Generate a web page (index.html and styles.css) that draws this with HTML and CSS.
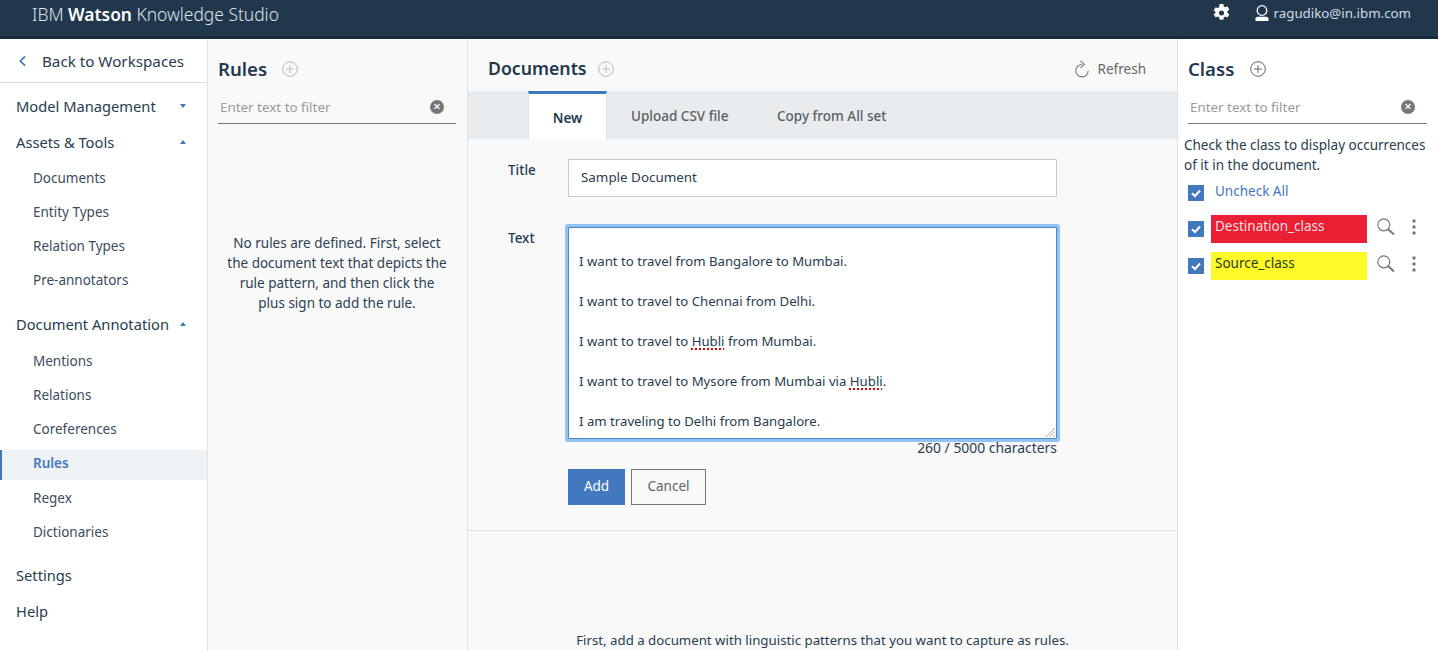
FILE: index.html
```html
<!DOCTYPE html>
<html lang="en">
<head>
<meta charset="utf-8">
<title>IBM Watson Knowledge Studio</title>
<link rel="stylesheet" href="styles.css">
</head>
<body>
<header class="topbar">
  <div class="brand">IBM <b>Watson</b> Knowledge Studio</div>
  <div class="top-right">
    <svg class="gear" viewBox="1.500 0.800 15 16.400" width="17" height="18"><path fill="#fff" fill-rule="evenodd" d="M7.300 0.800h3.400l.4 2.200 1.200.7 2.100-.8 1.700 3-1.700 1.400v1.400l1.700 1.400-1.700 3-2.100-.8-1.200.7-.4 2.200H7.300l-.4-2.200-1.200-.7-2.100.8-1.700-3 1.700-1.400V8.100L1.900 6.700l1.700-3 2.100.8 1.200-.7zM9 6.700a2.300 2.300 0 1 0 0 4.600 2.300 2.300 0 0 0 0-4.600z"/></svg>
    <svg class="user" viewBox="0 0 14 16" width="14" height="16"><circle cx="7" cy="5.500" r="4.800" fill="none" stroke="#fff" stroke-width="1.300"/><path fill="#fff" d="M2 11.800h10l1.500 1.500V16H.5v-2.700z"/></svg>
    <span class="email">ragudiko@in.ibm.com</span>
  </div>
</header>
<div class="main">
  <nav class="sidebar">
    <a class="back"><svg viewBox="0 0 10 14" width="9" height="12"><path d="M8 1.500 2.500 7 8 12.500" fill="none" stroke="#3f78c0" stroke-width="2"/></svg><span>Back to Workspaces</span></a>
    <div class="nav-head nav-first"><span>Model Management</span><i class="caret down"></i></div>
    <div class="nav-head nav-assets"><span>Assets &amp; Tools</span><i class="caret up"></i></div>
    <a class="nav-item">Documents</a>
    <a class="nav-item">Entity Types</a>
    <a class="nav-item">Relation Types</a>
    <a class="nav-item">Pre-annotators</a>
    <div class="nav-head nav-gap"><span>Document Annotation</span><i class="caret up"></i></div>
    <a class="nav-item">Mentions</a>
    <a class="nav-item">Relations</a>
    <a class="nav-item">Coreferences</a>
    <a class="nav-item active">Rules</a>
    <a class="nav-item">Regex</a>
    <a class="nav-item">Dictionaries</a>
    <div class="nav-head nav-gap2">Settings</div>
    <div class="nav-head">Help</div>
  </nav>

  <section class="rules">
    <div class="panel-title"><h2>Rules</h2>
      <svg class="plus faint" viewBox="0 0 16 16" width="16" height="16"><circle cx="8" cy="8" r="7.300"/><path d="M8 4v8M4 8h8"/></svg>
    </div>
    <div class="filter"><span>Enter text to filter</span><i class="clear">×</i></div>
    <p class="empty">No rules are defined. First, select the document text that depicts the rule pattern, and then click the plus sign to add the rule.</p>
  </section>

  <section class="docs">
    <div class="docs-head">
      <h2>Documents</h2>
      <svg class="plus faint" viewBox="0 0 16 16" width="16" height="16"><circle cx="8" cy="8" r="7.300"/><path d="M8 4v8M4 8h8"/></svg>
      <div class="refresh">
        <svg viewBox="0 0 14 18" width="14" height="18"><path d="M7 4.500A6.200 6.200 0 1 0 13.200 10.700" fill="none" stroke="#777" stroke-width="1.100"/><path d="M5.500 0.800 9.300 4.400 5.500 7.800" fill="none" stroke="#777" stroke-width="1.100"/></svg>
        <span>Refresh</span>
      </div>
    </div>
    <div class="tabs">
      <a class="tab current">New</a>
      <a class="tab">Upload CSV file</a>
      <a class="tab">Copy from All set</a>
    </div>
    <form class="doc-form">
      <div class="row">
        <label>Title</label>
        <div class="title-input">Sample Document</div>
      </div>
      <div class="row row-text">
        <label>Text</label>
        <div class="text-col">
          <div class="textarea">
            <p>I want to travel from Bangalore to Mumbai.</p>
            <p>I want to travel to Chennai from Delhi.</p>
            <p>I want to travel to <u>Hubli</u> from Mumbai.</p>
            <p>I want to travel to Mysore from Mumbai via <u>Hubli</u>.</p>
            <p>I am traveling to Delhi from Bangalore.</p>
            <svg class="grip" viewBox="0 0 11 11" width="11" height="11"><path d="M10 1 1 10M10 4.500 4.500 10M10 8l-2 2" stroke="#aaa" fill="none"/></svg>
          </div>
          <div class="count">260 / 5000 characters</div>
          <div class="actions"><button type="button" class="btn primary">Add</button><button type="button" class="btn ghost">Cancel</button></div>
        </div>
      </div>
    </form>
    <div class="docs-foot">First, add a document with linguistic patterns that you want to capture as rules.</div>
  </section>

  <aside class="classes">
    <div class="panel-title"><h2>Class</h2>
      <svg class="plus dark" viewBox="0 0 16 16" width="16" height="16"><circle cx="8" cy="8" r="7.300"/><path d="M8 4v8M4 8h8"/></svg>
    </div>
    <div class="filter"><span>Enter text to filter</span><i class="clear">×</i></div>
    <p class="hint">Check the class to display occurrences of it in the document.</p>
    <div class="check-all"><i class="check"><svg viewBox="0 0 16 16" width="16" height="16"><path d="M4 8.200 7 11l5-5.500" fill="none" stroke="#fff" stroke-width="2"/></svg></i><a>Uncheck All</a></div>
    <div class="class-row">
      <i class="check"><svg viewBox="0 0 16 16" width="16" height="16"><path d="M4 8.200 7 11l5-5.500" fill="none" stroke="#fff" stroke-width="2"/></svg></i>
      <div class="tag red">Destination_class</div>
      <svg class="lens" viewBox="0 0 18 18" width="18" height="18"><circle cx="6.800" cy="6.800" r="6"/><path d="M11 11l6 5.500" stroke-width="2"/></svg>
      <svg class="dots" viewBox="0 0 4 16" width="4" height="16"><circle cx="2" cy="2" r="1.700"/><circle cx="2" cy="8" r="1.700"/><circle cx="2" cy="14" r="1.700"/></svg>
    </div>
    <div class="class-row">
      <i class="check"><svg viewBox="0 0 16 16" width="16" height="16"><path d="M4 8.200 7 11l5-5.500" fill="none" stroke="#fff" stroke-width="2"/></svg></i>
      <div class="tag yellow">Source_class</div>
      <svg class="lens" viewBox="0 0 18 18" width="18" height="18"><circle cx="6.800" cy="6.800" r="6"/><path d="M11 11l6 5.500" stroke-width="2"/></svg>
      <svg class="dots" viewBox="0 0 4 16" width="4" height="16"><circle cx="2" cy="2" r="1.700"/><circle cx="2" cy="8" r="1.700"/><circle cx="2" cy="14" r="1.700"/></svg>
    </div>
  </aside>
</div>
</body>
</html>
```

FILE: styles.css
```css
* { box-sizing: border-box; }
html, body { margin: 0; height: 100%; overflow: hidden; }
body { font-family: "Noto Sans", "Open Sans", sans-serif; color: #273d4e; font-size: 13.2px; background: #fff; }
p { margin: 0; }
h2 { margin: 0; font-weight: 600; color: #1f3a50; line-height: 24px; }

.topbar { height: 39px; background: #20374c; border-bottom: 3px solid #152a3b; display: flex; align-items: flex-start; justify-content: space-between; color: #fff; }
.brand { margin-left: 32px; font-size: 17.4px; line-height: 29px; color: #dfe5ea; font-weight: 300; }
.brand b { font-weight: 600; color: #fff; }
.top-right { display: flex; align-items: center; height: 26px; margin-right: 27px; }
.gear { margin-right: 25px; }
.user { margin-right: 5px; }
.email { font-size: 13.3px; color: #d5dce2; }

.main { display: flex; height: 611px; }
.sidebar { width: 208px; flex: none; border-right: 1px solid #dfe3e6; background: #fff; }
.back { display: flex; align-items: center; height: 44px; border-bottom: 1px solid #dcdcdc; padding-left: 18px; font-size: 15.2px; color: #273d4e; }
.back span { margin-left: 15px; }
.nav-head { display: flex; align-items: center; justify-content: space-between; height: 36px; padding: 0 21px 0 16px; font-size: 14.7px; color: #273d4e; }
.nav-first { margin-top: 5px; }
.nav-assets { margin-bottom: 1px; }
.nav-gap { margin-top: 9px; margin-bottom: 2px; }
.nav-gap2 { margin-top: 8px; }
.caret { width: 0; height: 0; border-left: 3.5px solid transparent; border-right: 3.5px solid transparent; }
.caret.down { border-top: 4px solid #3f78c0; }
.caret.up { border-bottom: 4px solid #3f78c0; }
.nav-item { display: flex; align-items: center; height: 34px; padding-left: 33px; font-size: 13.5px; color: #3a4d5c; }
.nav-item.active { height: 30px; margin: 4px 0 1px; background: #eff2f5; border-left: 2px solid #4178be; padding: 0 0 4px 31px; font-weight: 600; color: #4178be; }

.rules { width: 260px; flex: none; background: #f9f9f9; border-right: 1px solid #dfe3e6; padding: 0 11px 0 10px; }
.panel-title { display: flex; align-items: center; height: 24px; margin-top: 18px; }
.panel-title h2 { margin-right: 15px; font-size: 18.6px; }
.classes .panel-title h2 { margin-right: 16px; }
.plus { fill: none; stroke-width: 1; }
.plus.faint { stroke: #b8b8b8; }
.plus.dark { stroke: #666; }
.filter { display: flex; align-items: center; justify-content: space-between; height: 35px; margin-top: 8px; border-bottom: 1px solid #777; padding: 1px 12px 0 2px; color: #9a9a9a; font-size: 13.4px; }
.clear { width: 14px; height: 14px; border-radius: 50%; background: #777; color: #fff; font-style: normal; font-size: 13px; line-height: 13px; text-align: center; font-weight: 600; }
.empty { margin: 109px 8px 0; text-align: center; line-height: 20px; font-size: 13.5px; color: #2c4152; }

.docs { width: 710px; flex: none; background: #f9f9f9; border-right: 1px solid #dfe3e6; position: relative; }
.docs-head { display: flex; align-items: center; height: 52px; padding: 7px 31px 0 20px; }
.docs-head h2 { font-size: 17.7px; margin-top: -1px; }
.docs-head .plus { margin-left: 11px; }
.refresh { margin-left: auto; display: flex; align-items: center; color: #666; font-size: 13.5px; }
.refresh span { margin-left: 9px; }
.tabs { display: flex; height: 48px; background: #e9ecee; padding-left: 60px; }
.tab { display: flex; align-items: center; padding: 2px 24px 0; font-size: 13.5px; font-weight: 500; color: #5a5f63; }
.tab:last-child { margin-left: 0.5px; }
.tab.current { width: 79px; justify-content: center; padding: 3px 0 0; background: #fff; border-top: 3px solid #3f78c0; border-left: 1px solid #dfe3e6; border-right: 1px solid #dfe3e6; color: #1f3a50; font-weight: 600; }
.doc-form { height: 392px; border-bottom: 1px solid #dfdfdf; }
.row { display: flex; padding-left: 40px; }
.row label { width: 60px; font-size: 13.5px; font-weight: 500; color: #273d4e; }
.row:first-child { padding-top: 20px; }
.row:first-child label { line-height: 22px; }
.title-input { width: 489px; height: 38px; border: 1px solid #cbcbcb; background: #fff; padding-left: 12px; line-height: 35px; font-size: 13.4px; }
.row-text { margin-top: 30px; }
.row-text label { line-height: 22px; }
.text-col { width: 489px; }
.textarea { position: relative; height: 212px; background: #fff; border: 1px solid #4c84c4; box-shadow: 0 0 0 3px #92c3f5; border-radius: 1px; padding: 23px 10px 0; }
.textarea p { line-height: 20px; height: 40px; font-size: 13.2px; white-space: nowrap; }
.textarea u { text-decoration: underline dotted #e00000 1.5px; text-underline-offset: 2px; }
.grip { position: absolute; right: 0; bottom: 0; }
.count { text-align: right; font-size: 13.9px; line-height: 18px; }
.actions { display: flex; gap: 6px; margin-top: 12px; }
.btn { height: 36px; font: inherit; font-size: 13.5px; padding: 0 0 2px; }
.primary { width: 57px; background: #4178be; border: 0; color: #fff; }
.ghost { width: 75px; background: transparent; border: 1px solid #777; color: #5e6468; }
.docs-foot { text-align: center; margin-top: 99px; font-size: 13.25px; line-height: 20px; }

.classes { flex: 1; background: #fff; padding: 0 11px 0 6px; }
.classes .panel-title { padding-left: 4px; }
.classes .filter { margin-left: 4px; }
.hint { margin-top: 11px; line-height: 20px; font-size: 13.5px; }
.check { width: 16px; height: 16px; background: #4178be; display: block; flex: none; }
.check svg { display: block; }
.check-all { display: flex; align-items: flex-start; padding-left: 4px; margin-top: 7px; height: 33px; }
.check-all .check { margin-top: 3px; }
.check-all a { margin-left: 11px; color: #3f78c0; font-size: 13.5px; line-height: 18px; }
.class-row { display: flex; align-items: center; padding-left: 4px; height: 28px; margin-bottom: 9px; }
.tag { width: 156px; height: 28px; margin-left: 7px; padding-left: 4px; font-size: 13.5px; line-height: 23px; }
.tag.red { background: #ea1f33; color: #f9dfe2; }
.tag.yellow { background: #fffa27; color: #273d20; }
.lens { margin: -4px 0 0 10px; fill: none; stroke: #777; stroke-width: 1.2; }
.dots { margin: -4px 0 0 17px; fill: #777; }
```
